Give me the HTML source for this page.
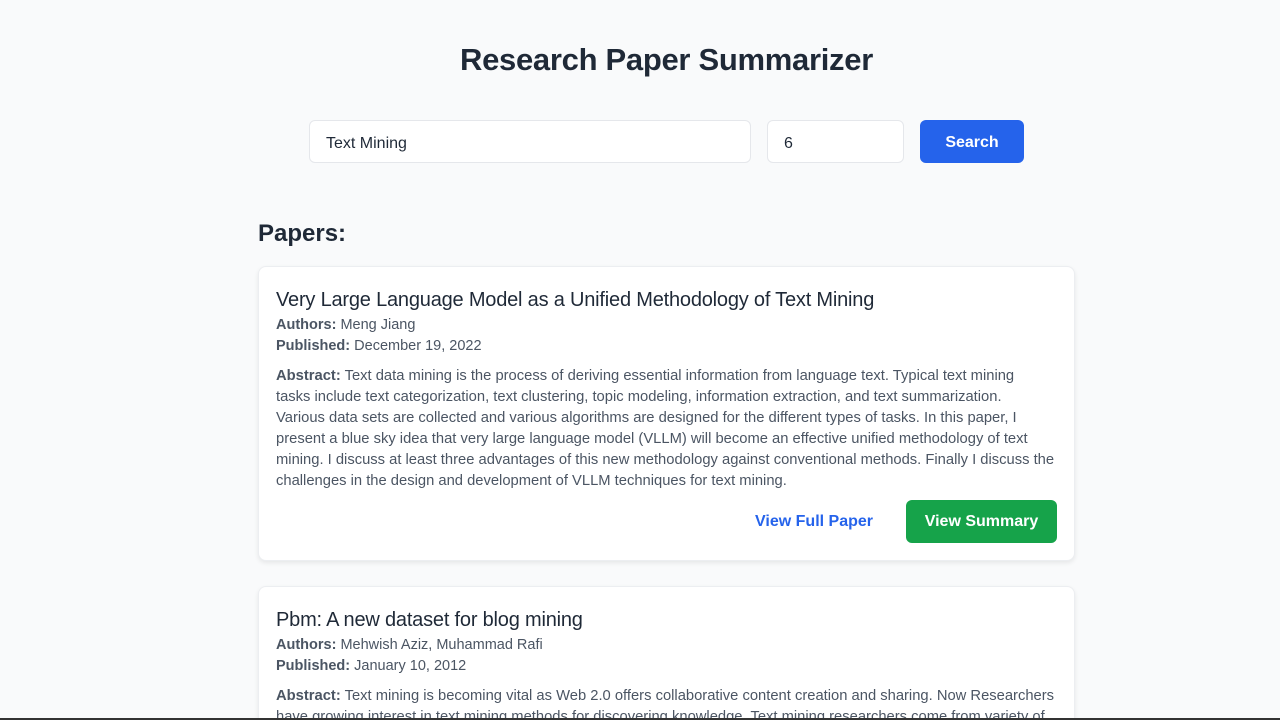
<!DOCTYPE html>
<html><head><meta charset="utf-8"><style>
*{box-sizing:border-box;margin:0;padding:0}
html,body{width:1280px;height:720px;overflow:hidden}
body{background:#f9fafb;font-family:"Liberation Sans",sans-serif;color:#1f2937;position:relative}
h1{position:absolute;top:42px;left:0;width:1333px;text-align:center;font-size:31px;font-weight:bold;color:#1f2937;letter-spacing:-0.3px}
.inp{position:absolute;top:120px;height:43px;background:#fff;border:1px solid #e5e7eb;border-radius:6px;font-size:16px;padding:14px 16px 0;color:#1f2937}
.btn{position:absolute;top:120px;left:920px;width:104px;height:43px;background:#2563eb;color:#fff;border-radius:6px;font-size:16px;font-weight:bold;text-align:center;line-height:46px}
h2{position:absolute;top:220px;left:258px;font-size:24px;font-weight:bold;color:#1f2937}
.card{position:absolute;left:258px;width:817px;background:#fff;border:1px solid #eceef1;border-radius:8px;box-shadow:0 2px 5px rgba(0,0,0,0.08);padding:19px 17px;overflow:hidden}
.t{font-size:20px;color:#1f2937;margin-top:3px;height:26px;letter-spacing:-0.2px}
.m{font-size:14.5px;color:#4b5563;line-height:21px}
.m b{color:#4b5563}
.a{font-size:14.75px;color:#4b5563;line-height:21px;margin-top:9px;white-space:nowrap}
.acts{position:absolute;right:17px;top:233px;height:43px}
.vf{position:absolute;right:184px;top:13px;color:#2563eb;font-weight:bold;font-size:16px;white-space:nowrap}
.vs{position:absolute;right:0;top:0;width:151px;height:43px;background:#16a34a;color:#fff;border-radius:6px;font-weight:bold;font-size:16px;text-align:center;line-height:44px}
.bar{position:absolute;left:0;top:718px;width:1280px;height:2px;background:#333}
</style></head><body>
<h1>Research Paper Summarizer</h1>
<div class="inp" style="left:309px;width:442px">Text Mining</div>
<div class="inp" style="left:767px;width:137px">6</div>
<div class="btn">Search</div>
<h2>Papers:</h2>
<div class="card" style="top:266px;height:295px">
<div class="t">Very Large Language Model as a Unified Methodology of Text Mining</div>
<div class="m"><b>Authors:</b> Meng Jiang</div>
<div class="m"><b>Published:</b> December 19, 2022</div>
<div class="a"><b>Abstract:</b> Text data mining is the process of deriving essential information from language text. Typical text mining<br>tasks include text categorization, text clustering, topic modeling, information extraction, and text summarization.<br>Various data sets are collected and various algorithms are designed for the different types of tasks. In this paper, I<br>present a blue sky idea that very large language model (VLLM) will become an effective unified methodology of text<br>mining. I discuss at least three advantages of this new methodology against conventional methods. Finally I discuss the<br>challenges in the design and development of VLLM techniques for text mining.</div>
<div class="acts" style="width:400px"><div class="vf">View Full Paper</div><div class="vs">View Summary</div></div>
</div>
<div class="card" style="top:586px;height:134px;border-bottom:none;border-radius:8px 8px 0 0">
<div class="t">Pbm: A new dataset for blog mining</div>
<div class="m"><b>Authors:</b> Mehwish Aziz, Muhammad Rafi</div>
<div class="m"><b>Published:</b> January 10, 2012</div>
<div class="a"><b>Abstract:</b> Text mining is becoming vital as Web 2.0 offers collaborative content creation and sharing. Now Researchers<br>have growing interest in text mining methods for discovering knowledge. Text mining researchers come from variety of</div>
</div>
<div class="bar"></div>
</body></html>
